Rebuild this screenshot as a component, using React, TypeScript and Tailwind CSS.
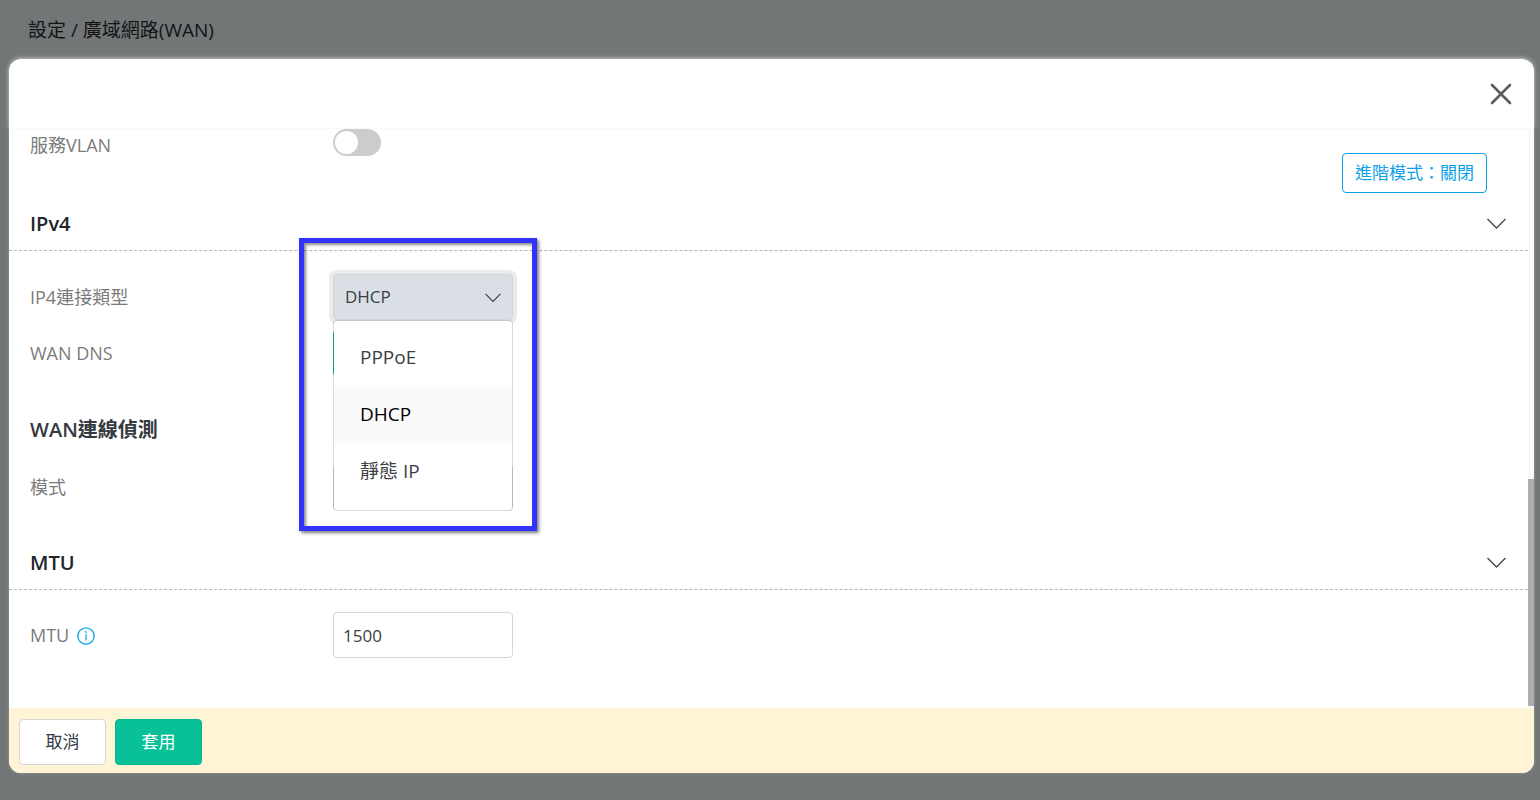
import { useState } from "react";
import type { ReactNode } from "react";

const CONNECTION_TYPES = ["PPPoE", "DHCP", "靜態 IP"];

function Chevron({ className }: { className: string }) {
  return (
    <svg viewBox="0 0 20 12" fill="none" stroke="currentColor" strokeWidth="1.4" className={className} aria-hidden="true">
      <path d="M1 1 10 10 19 1" />
    </svg>
  );
}

function SectionHeader({ title }: { title: string }) {
  return (
    <div className="flex h-[53px] items-center justify-between border-b border-dashed border-[#b5b5b5] px-[21px]">
      <h2 className="text-[20px] leading-7 font-semibold text-[#212529]">{title}</h2>
      <button type="button" aria-label={title} className="text-[#4a4a4a]">
        <Chevron className="h-3 w-[21px]" />
      </button>
    </div>
  );
}

function Row({ label, htmlFor, children }: { label: ReactNode; htmlFor: string; children?: ReactNode }) {
  return (
    <div className="flex h-[46px] items-center px-[21px]">
      <label htmlFor={htmlFor} className="flex w-[303px] shrink-0 items-center gap-2 text-[18px] leading-6 text-[#7b7b7b]">
        {label}
      </label>
      {children}
    </div>
  );
}

function InfoIcon() {
  return (
    <svg viewBox="0 0 18 18" fill="none" className="mt-0.5 size-[18px] text-[#12a5ee]" aria-hidden="true">
      <circle cx="9" cy="9" r="8.2" stroke="currentColor" strokeWidth="1.3" />
      <path d="M9 7.3V13.5" stroke="currentColor" strokeWidth="1.3" />
      <circle cx="9" cy="5" r="0.9" fill="currentColor" />
    </svg>
  );
}

export default function App() {
  const [type, setType] = useState("DHCP");
  const [vlan, setVlan] = useState(false);
  const [mtu, setMtu] = useState("1500");

  return (
    <div className="flex min-h-screen flex-col bg-[#727677] pr-1.5 pb-[27px] pl-[9px] font-['Open_Sans','Noto_Sans_CJK_TC',sans-serif]">
      <header className="flex h-[59px] items-center pl-[19px]">
        <h1 className="text-[19px] leading-7 text-[#121416]">設定 / 廣域網路(WAN)</h1>
      </header>

      <main role="dialog" className="flex flex-1 flex-col rounded-xl bg-white shadow-[0_0_3px_rgba(200,205,210,0.5)]">
        <div className="flex h-[70px] items-center justify-end rounded-t-xl border-b border-[#f9f9f9] pr-[21px] shadow-[0_-1px_5px_rgba(255,255,255,0.45)]">
          <button type="button" aria-label="關閉" className="text-[#5b5d63]">
            <svg viewBox="0 0 24 24" fill="none" stroke="currentColor" strokeWidth="2.6" strokeLinecap="round" className="size-6" aria-hidden="true">
              <path d="M3 3 21 21M21 3 3 21" />
            </svg>
          </button>
        </div>

        <div className="flex flex-1 bg-white">
          <div className="relative min-w-0 flex-1 pb-[50px]">
            <button
              type="button"
              className="absolute top-6 right-[41px] h-10 rounded border border-[#0b9fe8] bg-white px-3 text-[17px] leading-6 text-[#0b9fe8]"
            >
              進階模式：關閉
            </button>

            <div className="flex h-8 px-[21px]">
              <label htmlFor="vlan" className="w-[303px] shrink-0 text-[18px] leading-8 text-[#7b7b7b]">
                服務VLAN
              </label>
              <input
                id="vlan"
                type="checkbox"
                role="switch"
                checked={vlan}
                onChange={(e) => setVlan(e.target.checked)}
                className="h-[27px] w-12 appearance-none rounded-full bg-[#ccc] p-0.5 before:block before:size-[23px] before:rounded-full before:bg-white checked:bg-[#09c199] checked:before:ml-auto"
              />
            </div>

            <section className="mt-[37px]">
              <SectionHeader title="IPv4" />
              <div className="flex flex-col gap-2.5 pt-[23px]">
                <Row label="IP4連接類型" htmlFor="type">
                  <div className="relative z-10 w-[180px]">
                    <select
                      id="type"
                      value={type}
                      onChange={(e) => setType(e.target.value)}
                      className="block h-[46px] w-full appearance-none rounded border border-[#cfd4da] bg-[#dadfe6] px-[11px] text-[17px] leading-6 text-[#3c4044] ring-4 ring-[#e9ebec]"
                    >
                      {CONNECTION_TYPES.map((t) => (
                        <option key={t}>{t}</option>
                      ))}
                    </select>
                    <Chevron className="pointer-events-none absolute top-[19px] right-[11px] h-2.5 w-[18px] text-[#3c4044]" />
                    <ul
                      role="listbox"
                      className="absolute top-full right-0 left-0 rounded border border-black/15 bg-white bg-clip-padding py-[9px] text-[19px] leading-6 text-[#3c4044]"
                    >
                      {CONNECTION_TYPES.map((t) => (
                        <li
                          key={t}
                          role="option"
                          aria-selected={t === type}
                          onClick={() => setType(t)}
                          className="flex h-[57px] items-center px-[26px] pb-1 aria-selected:bg-[#fafafa] aria-selected:text-black"
                        >
                          {t}
                        </li>
                      ))}
                    </ul>
                    <div className="pointer-events-none absolute -top-9 -right-6 -left-[34px] h-[293px] border-5 border-[#3333ff] shadow-[2px_2px_3px_rgba(0,0,0,0.5),inset_2px_2px_3px_rgba(0,0,0,0.45)]" />
                  </div>
                </Row>
                <Row label="WAN DNS" htmlFor="dns">
                  <button id="dns" type="button" className="h-[46px] w-[90px] rounded-l bg-[#09c199]" />
                </Row>
              </div>

              <h3 className="mt-10 mb-5 px-[21px] text-[20px] leading-7 font-semibold text-[#343a40]">WAN連線偵測</h3>
              <Row label="模式" htmlFor="mode">
                <button id="mode" type="button" className="h-[46px] w-[180px] rounded border border-[#d5d7d9]" />
              </Row>
            </section>

            <section className="mt-[27px]">
              <SectionHeader title="MTU" />
              <div className="pt-[22px]">
                <Row
                  htmlFor="mtu"
                  label={
                    <>
                      MTU
                      <InfoIcon />
                    </>
                  }
                >
                  <input
                    id="mtu"
                    value={mtu}
                    onChange={(e) => setMtu(e.target.value)}
                    className="h-[46px] w-[180px] rounded border border-[#d5d7d9] bg-white px-[9px] text-[17px] leading-6 text-[#3c4044]"
                  />
                </Row>
              </div>
            </section>
          </div>

          <div className="flex w-1.5 flex-col justify-end bg-[#f8faf9] pb-0.5" aria-hidden="true">
            <div className="h-[227px] bg-[#adadad]" />
          </div>
        </div>

        <footer className="flex h-[65px] gap-[9px] rounded-b-xl bg-[#fff5d6] px-2.5 pt-[11px] text-[17px] leading-6">
          <button type="button" className="h-[46px] w-[87px] rounded border border-[#d5d7d9] bg-white text-[#343a40]">
            取消
          </button>
          <button type="button" className="h-[46px] w-[87px] rounded border border-[#08b48e] bg-[#09c199] text-white">
            套用
          </button>
        </footer>
      </main>
    </div>
  );
}
